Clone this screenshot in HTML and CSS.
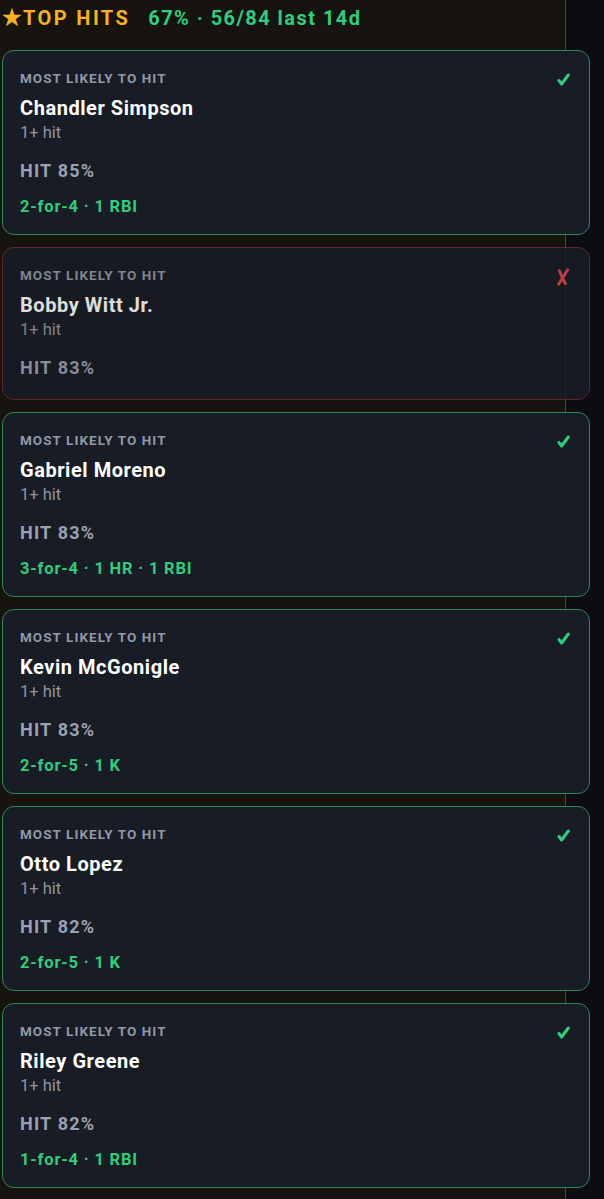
FILE: index.html
```html
<!DOCTYPE html>
<html lang="en">
<head>
<meta charset="utf-8">
<title>Top Hits</title>
<link rel="stylesheet" href="styles.css">
</head>
<body>
<div class="panel">
  <header class="head">
    <span class="title"><span class="star">★</span>TOP HITS</span>
    <span class="record">67% · 56/84 last 14d</span>
  </header>
  <div class="list">
    <article class="card win">
      <div class="top"><span class="label">MOST LIKELY TO HIT</span><svg class="mark" width="13" height="13" viewBox="0 0 13 13"><path d="M2 7.5 L4.6 11 L11.3 2" /></svg></div>
      <div class="name">Chandler Simpson</div>
      <div class="sub">1+ hit</div>
      <div class="prob">HIT 85%</div>
      <div class="result">2-for-4 · 1 RBI</div>
    </article>
    <article class="card loss">
      <div class="top"><span class="label">MOST LIKELY TO HIT</span><svg class="cross" width="14" height="18" viewBox="0 0 14 18"><path d="M11.8 1.8 C9 6 6 11 2.6 16.2" /><path d="M3.4 2.6 C5 7 7 12 9.4 15.6" /></svg></div>
      <div class="name">Bobby Witt Jr.</div>
      <div class="sub">1+ hit</div>
      <div class="prob">HIT 83%</div>
    </article>
    <article class="card win">
      <div class="top"><span class="label">MOST LIKELY TO HIT</span><svg class="mark" width="13" height="13" viewBox="0 0 13 13"><path d="M2 7.5 L4.6 11 L11.3 2" /></svg></div>
      <div class="name">Gabriel Moreno</div>
      <div class="sub">1+ hit</div>
      <div class="prob">HIT 83%</div>
      <div class="result">3-for-4 · 1 HR · 1 RBI</div>
    </article>
    <article class="card win">
      <div class="top"><span class="label">MOST LIKELY TO HIT</span><svg class="mark" width="13" height="13" viewBox="0 0 13 13"><path d="M2 7.5 L4.6 11 L11.3 2" /></svg></div>
      <div class="name">Kevin McGonigle</div>
      <div class="sub">1+ hit</div>
      <div class="prob">HIT 83%</div>
      <div class="result">2-for-5 · 1 K</div>
    </article>
    <article class="card win">
      <div class="top"><span class="label">MOST LIKELY TO HIT</span><svg class="mark" width="13" height="13" viewBox="0 0 13 13"><path d="M2 7.5 L4.6 11 L11.3 2" /></svg></div>
      <div class="name">Otto Lopez</div>
      <div class="sub">1+ hit</div>
      <div class="prob">HIT 82%</div>
      <div class="result">2-for-5 · 1 K</div>
    </article>
    <article class="card win">
      <div class="top"><span class="label">MOST LIKELY TO HIT</span><svg class="mark" width="13" height="13" viewBox="0 0 13 13"><path d="M2 7.5 L4.6 11 L11.3 2" /></svg></div>
      <div class="name">Riley Greene</div>
      <div class="sub">1+ hit</div>
      <div class="prob">HIT 82%</div>
      <div class="result">1-for-4 · 1 RBI</div>
    </article>
  </div>
</div>
</body>
</html>
```
FILE: styles.css
```css
* { box-sizing: border-box; }
html, body { margin: 0; padding: 0; }
body {
  background: #0b0d12;
  font-family: Roboto, "Liberation Sans", sans-serif;
  overflow: hidden;
}
.panel {
  width: 566px;
  min-height: 1199px;
  background: #17140f;
  border-right: 1px solid #5a4619;
}
.head {
  display: flex;
  align-items: baseline;
  gap: 18px;
  height: 50px;
  padding: 5px 0 0 2px;
}
.title {
  color: #f5b223;
  font-weight: 700;
  font-size: 20px;
  letter-spacing: 2.4px;
}
.star {
  font-size: 22px;
  letter-spacing: 0;
  margin-right: 1px;
}
.record {
  color: #2fcd7d;
  font-weight: 700;
  font-size: 20px;
  letter-spacing: 1.45px;
}
.list {
  display: flex;
  flex-direction: column;
  gap: 12px;
  padding-left: 2px;
}
.card {
  width: 588px;
  background: #181c24;
  border: 1.5px solid #2a875b;
  border-radius: 12px;
  padding: 18px 18px 17px 17px;
}
.card.loss {
  border-color: #6e2a33;
  opacity: 0.86;
}
.top {
  display: flex;
  justify-content: space-between;
  align-items: flex-start;
  height: 18px;
}
.label {
  color: #9199a8;
  font-weight: 700;
  font-size: 13.5px;
  line-height: 18px;
  letter-spacing: 1.05px;
}
.mark {
  flex: none;
  margin-top: 4px;
  margin-right: 1px;
}
.mark path {
  fill: none;
  stroke: #2fcd7d;
  stroke-width: 3;
  stroke-linecap: round;
  stroke-linejoin: round;
}
.cross {
  flex: none;
  margin-top: 2px;
  margin-right: 1px;
}
.cross path {
  fill: none;
  stroke: #e0444d;
  stroke-width: 2.8;
  stroke-linecap: round;
}
.name {
  color: #ffffff;
  font-weight: 700;
  font-size: 20px;
  line-height: 24px;
  margin-top: 9px;
  letter-spacing: 0.55px;
}
.sub {
  color: #8e95a3;
  font-size: 16.5px;
  line-height: 20px;
  margin-top: 3px;
}
.prob {
  color: #9aa1b0;
  font-weight: 700;
  font-size: 18px;
  line-height: 22px;
  margin-top: 17px;
  margin-bottom: 3px;
  letter-spacing: 1.2px;
}
.result {
  color: #2fcd7d;
  font-weight: 700;
  font-size: 16.5px;
  line-height: 20px;
  margin-top: 15px;
  letter-spacing: 0.8px;
}
```
